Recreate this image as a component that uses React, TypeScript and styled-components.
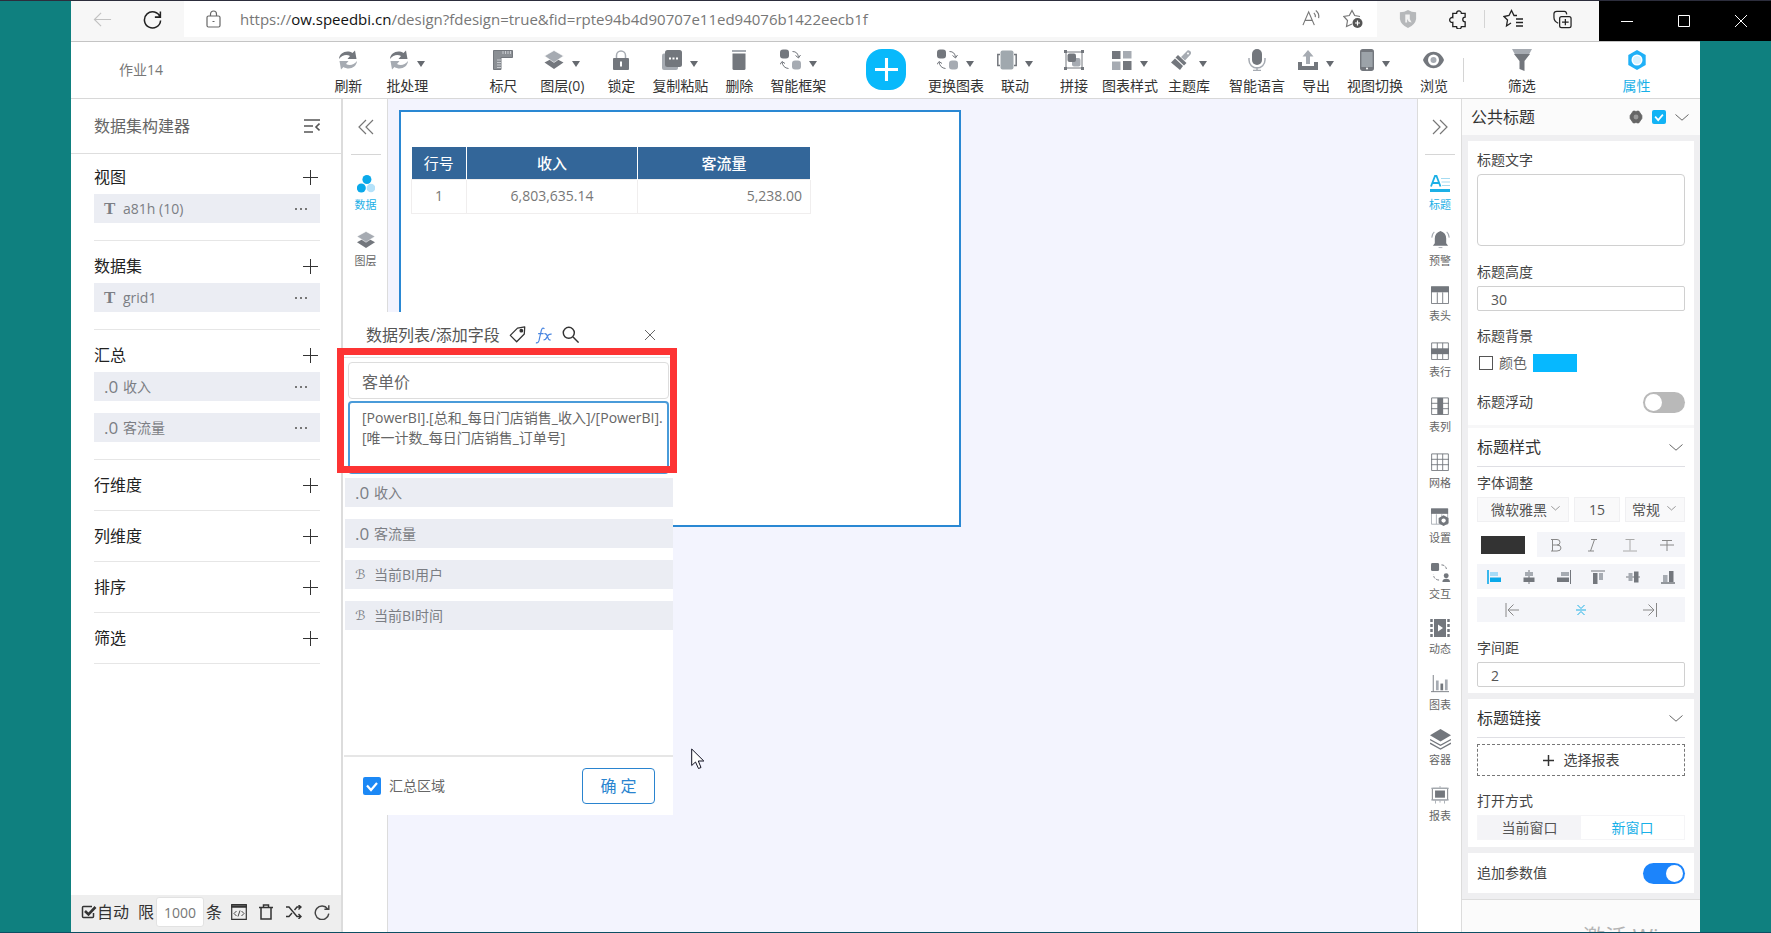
import React from 'react';
import styled, { createGlobalStyle, css } from 'styled-components';

const GlobalStyle = createGlobalStyle`
  *, *::before, *::after { box-sizing: border-box; }
  html, body { margin: 0; padding: 0; }
  body {
    font-family: "Open Sans", "Noto Sans CJK SC", sans-serif;
    font-size: 14px;
    line-height: 20px;
    color: #444;
    background: #0f807f;
    overflow: hidden;
  }
  button, input, select, textarea { font: inherit; color: inherit; margin: 0; }
  button { border: 0; padding: 0; background: none; cursor: pointer; }
  h1, h2, h3, ul { margin: 0; padding: 0; font-weight: 400; list-style: none; }
  svg { display: block; flex: none; }
`;

const Screen = styled.div`
  height: 100vh;
  display: flex;
  flex-direction: column;
  background: #0f807f;
  border-top: 1px solid #2c2d3c;
  border-bottom: 1px solid #0c4f63;
`;

/* ---------- browser bar ---------- */
const BrowserBar = styled.header`
  flex: none;
  height: 40px;
  margin-left: 71px;
  display: flex;
  background: #f7f7f7;
`;
const NavButtons = styled.div`
  width: 113px;
  padding-left: 22px;
  display: flex;
  align-items: center;
  gap: 31px;
  height: 36px;
`;
const Address = styled.div`
  flex: 1;
  min-width: 0;
  height: 36px;
  padding: 0 14px 0 22px;
  display: flex;
  align-items: center;
  background: #fff;
`;
const Url = styled.span`
  flex: 1;
  margin-left: 19px;
  font-size: 15px;
  color: #777;
  white-space: nowrap;
  overflow: hidden;
  b { font-weight: 400; color: #111; }
`;
const AddressTools = styled.div`
  display: flex;
  gap: 22px;
`;
const Extensions = styled.div`
  width: 222px;
  height: 36px;
  padding-left: 22px;
  display: grid;
  grid-template-columns: 50px 35px 19px 50px 20px;
  align-items: center;
`;
const Separator = styled.i<{ $h: number }>`
  flex: none;
  width: 1px;
  height: ${p => p.$h}px;
  background: #d4d4d4;
`;
const WindowControls = styled.div`
  width: 172px;
  padding-right: 2px;
  display: grid;
  grid-template-columns: repeat(3, 1fr);
  background: #000;
  button { display: grid; place-items: center; }
`;

/* ---------- application ---------- */
const AppWindow = styled.main`
  flex: 1;
  min-height: 0;
  margin: 0 71px;
  display: flex;
  flex-direction: column;
  background: #fff;
  border-top: 1px solid #c4c4c4;
`;
const TopBar = styled.div`
  flex: none;
  height: 57px;
  display: flex;
  align-items: center;
  border-bottom: 1px solid #d8d8d8;
`;
const ReportName = styled.h1`
  width: 250px;
  padding-left: 48px;
  font-size: 14px;
  color: #777;
`;
const ToolGroup = styled.div<{ $before?: number }>`
  display: flex;
  margin-left: ${p => p.$before ?? 0}px;
`;
const ToolButton = styled.button<{ $active?: boolean }>`
  width: 59px;
  padding-top: 4px;
  display: flex;
  flex-direction: column;
  align-items: center;
  gap: 5px;
  white-space: nowrap;
  color: ${p => (p.$active ? '#18b0e8' : '#333')};
`;
const ToolIcon = styled.span`
  height: 22px;
  display: flex;
  align-items: center;
  gap: 8px;
`;
const Caret = styled.i`
  margin-top: 8px;
  border: 4px solid transparent;
  border-top: 6px solid #666a70;
  border-bottom: 0;
`;
const AddButton = styled.button`
  width: 41px;
  height: 41px;
  margin: 0 20px 2px 38px;
  border-radius: 16px;
  display: grid;
  place-items: center;
  background: #08b9fb;
`;
const PanelTabs = styled.div`
  width: 239px;
  margin-left: auto;
  padding-right: 6px;
  display: grid;
  grid-template-columns: auto 1fr 1fr;
  align-items: center;
  justify-items: center;
`;
const Workspace = styled.div`
  flex: 1;
  min-height: 0;
  display: flex;
  position: relative;
`;

/* ---------- dataset builder ---------- */
const Builder = styled.aside`
  width: 272px;
  flex: none;
  display: flex;
  flex-direction: column;
  border-right: 2px solid #dcdcdc;
`;
const BuilderHead = styled.div`
  height: 55px;
  flex: none;
  padding: 0 21px 0 23px;
  display: flex;
  align-items: center;
  justify-content: space-between;
  border-bottom: 1px solid #dedede;
  h2 { font-size: 16px; color: #666; }
`;
const Sections = styled.div`
  flex: 1;
  padding: 0 21px 0 23px;
`;
const Section = styled.section`
  padding: 13px 0;
  border-bottom: 1px solid #e6e6e6;
  &:first-child { padding-top: 11px; }
`;
const SectionHead = styled.div`
  height: 24px;
  padding-right: 2px;
  display: flex;
  align-items: center;
  justify-content: space-between;
  h3 { font-size: 16px; color: #222; }
`;
const FieldList = styled.ul`
  display: flex;
  flex-direction: column;
  gap: 12px;
  margin: 5px 0 4px;
`;
const FieldRow = styled.li`
  height: 29px;
  padding: 0 13px 0 10px;
  display: flex;
  align-items: center;
  background: #ebedf3;
  color: #7b7e84;
`;
const TypeMark = styled.span<{ $kind: string }>`
  width: 19px;
  flex: none;
  font-family: ${p => (p.$kind === '.0' ? '"Open Sans"' : '"Liberation Serif", "DejaVu Serif"')}, serif;
  font-size: 17px;
  ${p => p.$kind === 'T' && css`font-weight: 700;`}
  ${p => p.$kind === 'ℬ' && css`font-family: "DejaVu Sans", serif; font-size: 13px; line-height: 18px;`}
`;
const MoreButton = styled.button`
  margin-left: auto;
  display: flex;
  gap: 3px;
  padding: 4px 0;
  i { width: 2px; height: 2px; background: #777; }
`;
const BuilderFoot = styled.div`
  flex: none;
  height: 37px;
  padding: 0 11px 3px 10px;
  display: flex;
  align-items: center;
  font-size: 16px;
  color: #333;
  background: #eee;
  label { display: flex; align-items: center; }
  label + label { margin-left: 9px; }
`;
const LimitInput = styled.input`
  width: 48px;
  height: 30px;
  margin: 0 2px;
  border: 1px solid #e2e2e2;
  border-radius: 3px;
  background: #fff;
  text-align: center;
  font-size: 14px;
  color: #777;
`;
const FootTools = styled.div`
  flex: 1;
  margin-left: 9px;
  display: flex;
  justify-content: space-between;
  align-items: center;
`;
const FootCheck = styled.input`
  appearance: none;
  width: 16px;
  height: 14px;
  background: url("data:image/svg+xml,%3Csvg xmlns='http://www.w3.org/2000/svg' viewBox='0 0 16 14' fill='none' stroke='%23333'%3E%3Cpath d='M11 1.5H2.500Q1.500 1.500 1.500 2.500V11.500Q1.500 12.500 2.500 12.500H11.500Q12.500 12.500 12.500 11.500V8' stroke-width='1.5'/%3E%3Cpath d='M4 6l3.500 3.500L14.500 2' stroke-width='2.600'/%3E%3C/svg%3E") center / contain no-repeat;
`;

/* ---------- rails ---------- */
const Rail = styled.nav<{ $side: 'left' | 'right' }>`
  width: 45px;
  padding-left: 1px;
  flex: none;
  display: flex;
  flex-direction: column;
  align-items: center;
  background: #fff;
  border: 0 solid #dcdcdc;
  border-width: ${p => (p.$side === 'left' ? '0 1px 0 0' : '0 1px')};
`;
const RailToggle = styled.button`
  height: 56px;
  width: 30px;
  flex: none;
  display: grid;
  place-items: center;
  border-bottom: 1px solid #d6d6d6;
`;
const RailList = styled.div<{ $height: number }>`
  flex: none;
  height: ${p => p.$height}px;
  margin-top: 17px;
  display: grid;
  grid-auto-rows: 1fr;
`;
const RailItem = styled.button<{ $active?: boolean }>`
  display: flex;
  flex-direction: column;
  align-items: center;
  gap: 1px;
  font-size: 11px;
  line-height: 16px;
  color: ${p => (p.$active ? '#1cb0e6' : '#666')};
`;
const RailIcon = styled.span`
  height: 24px;
  display: grid;
  place-items: center;
`;

/* ---------- canvas ---------- */
const Canvas = styled.div`
  flex: 1;
  min-width: 0;
  padding: 11px;
  background: #f3f4fe;
`;
const Sheet = styled.div`
  width: 562px;
  max-width: 100%;
  height: 417px;
  padding: 35px 10px;
  border: 2px solid #2a88d3;
  background: #fff;
`;
const Grid = styled.table`
  width: 399px;
  table-layout: fixed;
  border-collapse: collapse;
  th {
    height: 32px;
    padding: 0;
    border: 1px solid #fff;
    border-width: 0 1px;
    background: #336699;
    color: #fff;
    font-size: 15px;
    font-weight: 500;
  }
  th:first-child { font-weight: 400; border-left: 0; }
  td {
    height: 34px;
    padding: 0 8px;
    border: 1px solid #f0eeee;
    text-align: center;
    color: #777;
  }
  td:last-child { text-align: right; }
`;

/* ---------- field popup ---------- */
const Popup = styled.form`
  position: absolute;
  left: 273px;
  top: 213px;
  width: 329px;
  height: 503px;
  display: flex;
  flex-direction: column;
  background: #fff;
`;
const PopupHead = styled.div`
  height: 45px;
  flex: none;
  padding: 0 18px 0 22px;
  display: flex;
  align-items: center;
  h2 { font-size: 16px; color: #555; margin-right: 9px; }
  button + button { margin-left: 9px; }
  button:last-child { margin-left: auto; }
`;
const Editor = styled.div`
  padding: 4px;
  border-top: 1px solid #e2e2e2;
  display: flex;
  flex-direction: column;
  gap: 2px;
`;
const NameInput = styled.input`
  height: 37px;
  padding: 0 13px;
  border: 1px solid #ddd;
  border-radius: 4px;
  font-size: 16px;
  color: #666;
  outline: none;
`;
const FormulaInput = styled.textarea`
  height: 73px;
  padding: 5px 2px 5px 12px;
  border: 2px solid #4a9bd9;
  border-radius: 4px;
  resize: none;
  outline: none;
  overflow: hidden;
  color: #666;
  background: #fff;
`;
const PopupFields = styled(FieldList)`
  margin: 0 0 0 1px;
`;
const PopupFoot = styled.div`
  height: 60px;
  margin-top: auto;
  flex: none;
  padding: 0 18px 0 19px;
  display: flex;
  align-items: center;
  justify-content: space-between;
  border-top: 2px solid #e6e6e6;
  label { display: flex; align-items: center; gap: 8px; color: #666; }
`;
const BlueCheck = styled.input<{ $size: number; $color: string }>`
  appearance: none;
  width: ${p => p.$size}px;
  height: ${p => p.$size}px;
  border-radius: 2px;
  background: ${p => p.$color} url("data:image/svg+xml,%3Csvg xmlns='http://www.w3.org/2000/svg' viewBox='0 0 18 18' fill='none' stroke='white' stroke-width='2.200'%3E%3Cpath d='M4 8.500l4 4.500 6-7'/%3E%3C/svg%3E") center / contain no-repeat;
`;
const ConfirmButton = styled.button`
  width: 73px;
  height: 36px;
  border: 1px solid #2a84cf;
  border-radius: 4px;
  font-size: 16px;
  color: #2a84cf;
`;
const Highlight = styled.div`
  position: absolute;
  left: 266px;
  top: 249px;
  width: 340px;
  height: 125px;
  border: 7px solid #fd3434;
  pointer-events: none;
`;
const Pointer = styled.svg`
  position: absolute;
  left: 620px;
  top: 649px;
`;

/* ---------- property panel ---------- */
const Properties = styled.aside`
  width: 238px;
  flex: none;
  display: flex;
  flex-direction: column;
  background: #efeff1;
  overflow: hidden;
`;
const PropHead = styled.div`
  height: 36px;
  flex: none;
  padding: 0 11px 0 9px;
  display: flex;
  align-items: center;
  background: #fbfbfb;
  h2 { flex: 1; font-size: 16px; color: #333; }
`;
const HeadTools = styled.div`
  display: flex;
  align-items: center;
  gap: 9px;
`;
const Card = styled.section`
  flex: none;
  margin: 6px 6px 0;
  padding: 0 9px;
  background: #fff;
`;
const Block = styled.div<{ $top: number; $bottom?: number }>`
  padding: ${p => p.$top}px 0 ${p => p.$bottom ?? 0}px;
  display: flex;
  flex-direction: column;
`;
const Label = styled.label`
  margin-bottom: 4px;
  color: #444;
`;
const TextArea = styled.textarea`
  height: 72px;
  border: 1px solid #d0d0d0;
  border-radius: 4px;
  resize: none;
  background: #fff;
`;
const TextInput = styled.input`
  width: 100%;
  height: 25px;
  padding: 2px 13px 0;
  border: 1px solid #d0d0d0;
  border-radius: 2px;
  color: #555;
`;
const ColorRow = styled.div`
  height: 26px;
  display: flex;
  align-items: center;
  gap: 6px;
  label { display: flex; align-items: center; gap: 6px; color: #666; }
`;
const PlainCheck = styled.input`
  appearance: none;
  width: 14px;
  height: 14px;
  margin-left: 2px;
  border: 1px solid #555;
`;
const Swatch = styled.button<{ $color: string }>`
  width: 44px;
  height: 18px;
  background: ${p => p.$color};
`;
const SwitchRow = styled.label`
  height: 40px;
  display: flex;
  align-items: center;
  justify-content: space-between;
  color: #444;
`;
const Switch = styled.input`
  appearance: none;
  width: 42px;
  height: 21px;
  border-radius: 11px;
  background: #b9b9b9;
  padding: 2px;
  display: flex;
  &::before { content: ""; width: 17px; height: 17px; border-radius: 50%; background: #fff; }
  &:checked { background: #1c84fb; justify-content: flex-end; }
`;
const CardTitle = styled.div`
  height: 39px;
  padding-right: 2px;
  display: flex;
  align-items: center;
  justify-content: space-between;
  border-bottom: 1px solid #dfdfe4;
  h3 { font-size: 16px; color: #333; }
`;
const CardBreak = styled.div`
  height: 3px;
  margin: 0 -9px;
  background: #f7f7f8;
`;
const FontRow = styled.div`
  height: 25px;
  display: grid;
  grid-template-columns: 92px 46px 60px;
  gap: 5px;
`;
const SelectBox = styled.span<{ $pad: number }>`
  position: relative;
  select {
    appearance: none;
    width: 100%;
    height: 100%;
    padding: 0 0 0 ${p => p.$pad}px;
    border: 1px solid #f0f0f2;
    background: #f9f9fa;
    color: #555;
  }
  svg { position: absolute; right: 9px; top: 9px; pointer-events: none; }
`;
const SizeInput = styled.input`
  width: 100%;
  border: 1px solid #f0f0f2;
  background: #f9f9fa;
  text-align: center;
  color: #555;
`;
const StyleRow = styled.div`
  height: 25px;
  margin-top: 10px;
  padding-left: 4px;
  display: flex;
  align-items: center;
  justify-content: space-between;
`;
const ButtonStrip = styled.div<{ $cols: number; $width?: string; $top?: number }>`
  width: ${p => p.$width ?? '100%'};
  height: 25px;
  margin-top: ${p => p.$top ?? 0}px;
  display: grid;
  grid-template-columns: repeat(${p => p.$cols}, 1fr);
  background: #f4f5f9;
  button { display: grid; place-items: center; }
`;
const DashedButton = styled.button`
  height: 32px;
  border: 1px dashed #777;
  display: flex;
  align-items: center;
  justify-content: center;
  gap: 10px;
  color: #444;
`;
const Segmented = styled.div`
  height: 25px;
  display: grid;
  grid-template-columns: 1fr 1fr;
  border: 1px solid #f5f5f7;
`;
const Segment = styled.button<{ $active?: boolean }>`
  background: ${p => (p.$active ? '#fff' : '#f4f4f7')};
  color: ${p => (p.$active ? '#18b0e8' : '#555')};
`;
const PanelEnd = styled.div`
  flex: 1;
  margin-top: 6px;
  padding: 22px 28px 0;
  border-top: 1px solid #ddd;
  background: #fbfbfb;
  text-align: right;
  font-size: 22px;
  line-height: 28px;
  color: #b4b4b4;
  white-space: nowrap;
`;

/* ---------- icons ---------- */
const G = '#73777d';
const L = '#a6abb2';
type IconProps = { w?: number; h?: number; box?: string; stroke?: string; sw?: number; children: React.ReactNode };
const Icon = ({ w = 20, h, box, stroke, sw = 1, children }: IconProps) => (
  <svg width={w} height={h ?? w} viewBox={box ?? '0 0 20 20'} fill="none" stroke={stroke} strokeWidth={sw} aria-hidden="true">{children}</svg>
);
const Plus = ({ size = 15, color = '#333', sw = 1 }: { size?: number; color?: string; sw?: number }) => (
  <Icon w={size} box="0 0 15 15" stroke={color} sw={sw}><path d="M7.500 0V15M0 7.500H15" /></Icon>
);
const Chevron = ({ size = 14 }: { size?: number }) => (
  <Icon w={size} h={size / 2} box="0 0 14 7" stroke="#666"><path d="M0.500 0.500L7 6.200L13.500 0.500" /></Icon>
);

const glyphs: Record<string, React.ReactNode> = {
  refresh: (
    <Icon w={20}>
      <path d="M1 9C1.500 2.500 9 -0.500 14.500 3L17 0.500L18.500 9H9.500L12 6C8.500 4 4 5 1 9Z" fill={G} />
      <path d="M19 11C18.500 17.500 11 20.500 5.500 17L3 19.500L1.500 11H10.500L8 14C11.500 16 16 15 19 11Z" fill={L} />
    </Icon>
  ),
  ruler: (
    <Icon w={20}>
      <path d="M0.500 0.500H19.500V7.500H8V19.500H0.500Z" fill="#8b8f94" stroke={G} />
      <path d="M10 1V4M12.500 1V4M15 1V4M17.500 1V4M4 10H8M4 12.500H8M4 15H8M4 17.500H8" stroke="#c8cbd0" />
    </Icon>
  ),
  layers: (
    <Icon w={20}>
      <path d="M10 7.500L19.500 12.500L10 19L0.500 12.500Z" fill={G} />
      <path d="M10 0.500L19.500 6L10 12.500L0.500 6Z" fill={L} stroke="#fff" strokeWidth=".6" />
    </Icon>
  ),
  lock: (
    <Icon w={20}>
      <path d="M5.500 8V5.500A4.500 4.500 0 0 1 14.500 5.500V8" stroke={L} strokeWidth="1.5" />
      <rect x="2" y="8" width="16" height="12" rx="1" fill={G} /><path d="M10 11.500V16.500" stroke="#fff" strokeWidth="2" />
    </Icon>
  ),
  copy: (
    <Icon w={20}>
      <rect x="0" y="3.500" width="16" height="16.500" rx="2" fill={L} /><rect x="3" y="0" width="17" height="17" rx="2.500" fill={G} />
      <path d="M7 8.500H9M10.500 8.500H12.500M14 8.500H16" stroke="#fff" strokeWidth="2" />
    </Icon>
  ),
  trash: <Icon w={20}><path d="M3 1H17" stroke={L} strokeWidth="2" /><path d="M3.500 3.500H16.500V18.500Q16.500 20 15 20H5Q3.500 20 3.500 18.500Z" fill={G} /></Icon>,
  swap: (
    <Icon w={21} box="0 0 21 20">
      <rect x="0" y="0" width="9" height="9" rx="3" fill={G} /><rect x="12" y="11" width="9" height="9" rx="3" fill={L} />
      <path d="M12.500 2Q18 2 18.500 8M15.500 6L18.500 8.500L20.500 5.500M8.500 19Q3 18.500 2 12.500M0 15L2 12L5 14" stroke={G} />
    </Icon>
  ),
  link: <Icon w={20}><path d="M3 4.500H0.800V15.500H3M17 4.500H19.200V15.500H17" stroke={G} strokeWidth="1.500" /><rect x="3.500" y="0.500" width="13" height="19" rx="2" fill="#a0a8ae" /></Icon>,
  merge: (
    <Icon w={20}>
      <path d="M2 2H18V18H2Z" stroke={G} /><path d="M0 0H3V3H0ZM17 0H20V3H17ZM0 17H3V20H0ZM17 17H20V20H17Z" fill={G} />
      <rect x="8" y="8" width="8.500" height="8.500" rx="2" fill={L} /><rect x="3.500" y="3.500" width="8.500" height="8.500" rx="2" fill={G} />
    </Icon>
  ),
  tiles: <Icon w={20}><path d="M0 1H8.500V9H0ZM11 11H19.500V20H11Z" fill={G} /><path d="M11 1H19.500V8.500H11ZM0 11.500H8.500V20H0Z" fill={L} /></Icon>,
  brush: (
    <Icon w={20}>
      <path d="M10 7L15.500 1.500A2.400 2.400 0 0 1 19.500 4.500L14 10.500Z" fill={L} /><circle cx="17" cy="3.500" r="1" fill="#fff" />
      <path d="M7 5L15.500 13L13 15.500L4.500 7.500Z" fill={G} /><path d="M4 8.500L12 16L9 20L0 12.500Z" fill={G} />
    </Icon>
  ),
  mic: (
    <Icon w={20} h={22} box="0 0 20 22">
      <rect x="5" y="0" width="10" height="16" rx="5" fill={G} />
      <path d="M2 9V11A8 8 0 0 0 18 11V9M10 18V21M6 21.500H14" stroke={L} strokeWidth="1.500" />
    </Icon>
  ),
  upload: <Icon w={20}><path d="M10 0L15.500 6.500H12V14H8V6.500H4.500Z" fill={L} /><path d="M0 12H4V16H16V12H20V20H0Z" fill={G} /></Icon>,
  phone: <Icon w={14} h={22} box="0 0 14 22"><rect x=".7" y=".7" width="12.600" height="20.600" rx="2" fill="#9ca3a9" stroke={G} strokeWidth="1.400" /><path d="M1 18H13V21H1ZM1 1H13V3H1Z" fill={G} /><circle cx="7" cy="19.500" r="1" fill="#fff" /></Icon>,
  eye: <Icon w={21} h={18} box="0 0 21 18"><path d="M0 9C4-2 17-2 21 9C17 20 4 20 0 9Z" fill={G} /><circle cx="10.500" cy="9" r="5.500" fill="#fff" /><circle cx="10.500" cy="9" r="3" fill={L} /></Icon>,
  funnel: <Icon w={20} h={22} box="0 0 20 22"><path d="M0 0H20L17 5.500H3Z" fill={L} /><path d="M2 5H18L12.500 12V22L7.500 20V12Z" fill={G} /></Icon>,
  hexagon: <Icon w={20}><path d="M10 0L18.700 5V15L10 20L1.300 15V5Z" fill="#1fb0f7" /><circle cx="10" cy="10" r="5.500" fill="#fff" /><circle cx="10" cy="10" r="4" fill="#d9f2fe" /></Icon>,
};

const railGlyphs: Record<string, React.ReactNode> = {
  data: <Icon w={18}><circle cx="11" cy="5" r="5" fill="#0aa9ea" /><circle cx="4.800" cy="14.500" r="5" fill="#0aa9ea" /><circle cx="15.500" cy="14.500" r="4.800" fill="#b5e2fa" /></Icon>,
  layers: <Icon w={18}><path d="M10 7L20 12.500L10 19L0 12.500Z" fill={G} /><path d="M10 0.500L20 6L10 12.500L0 6Z" fill={L} stroke="#fff" strokeWidth=".6" /></Icon>,
  title: <Icon w={20}><path d="M1 12.500L5 2H6.500L10.500 12.500M2.500 9H9" stroke="#1cb0e6" strokeWidth="1.800" /><path d="M11 4.500H20M11.500 8H20M12 11.500H20" stroke="#a5dbf1" /><path d="M0 16.500H20" stroke="#1cb0e6" strokeWidth="3" /></Icon>,
  alarm: <Icon w={19}><path d="M10 1Q16 3 16 9V14L18 16.500H2L4 14V9Q4 3 10 1Z" fill={G} /><path d="M8 18.500H12" stroke={L} /><path d="M3.500 2Q1 4 .8 8M16.500 2Q19 4 19.200 8" stroke={L} strokeWidth="1.200" /></Icon>,
  thead: <Icon w={18}><path d="M.5 1H19.500V19.500H.5ZM7 7V19M13 7V19" stroke={G} /><path d="M0 .5H20V7H0Z" fill={G} /></Icon>,
  trow: <Icon w={18}><path d="M.7 1H19.300V19.500H.7ZM7 1V19M13 1V19" stroke={G} /><path d="M0 7H20V13.500H0Z" fill={G} /></Icon>,
  tcol: <Icon w={18}><path d="M.7 1H19.300V19.500H.7ZM0 7H20M0 13H20" stroke={G} /><path d="M7 1H13.500V19.500H7Z" fill={G} /></Icon>,
  mesh: <Icon w={18}><path d="M.7 1H19.300V19.500H.7ZM7 1V19M13 1V19M0 7H20M0 13H20" stroke={G} /></Icon>,
  config: <Icon w={18}><path d="M.5 1H18.500V18H.5ZM6 7V18M12 7V12" stroke={L} /><path d="M0 .5H19V6.500H0Z" fill={G} /><path d="M14 8L19.500 11V17L14 20L8.500 17V11Z" fill={G} /><circle cx="14" cy="14" r="2.400" fill="#fff" /></Icon>,
  interact: <Icon w={19}><rect x="0" y="0" width="8.500" height="8.500" rx="1.500" fill={G} /><circle cx="16" cy="13.500" r="2.600" fill={G} /><path d="M12 20Q12 16.500 16 16.500T20 20Z" fill={G} /><path d="M11 2Q16 2 16.500 8M8.500 18Q3 17.500 2.500 12" stroke={G} strokeDasharray="3 1.500" /></Icon>,
  motion: <Icon w={20} h={18} box="0 0 20 18"><path d="M4 0H16V18H4Z" fill={G} /><path d="M1.500 0V18M18.500 0V18" stroke={G} strokeWidth="2.500" strokeDasharray="3 2" /><path d="M8 5.500L13 9L8 12.500Z" fill="#fff" /></Icon>,
  chart: <Icon w={18}><path d="M2.500 0V18.500M0 18.500H20" stroke={G} /><path d="M5.500 6H8.500V17H5.500ZM15.500 5H18.500V17H15.500Z" fill={L} /><path d="M10.500 9.500H13.500V17H10.500Z" fill={G} /></Icon>,
  stack: <Icon w={21}><path d="M10 0L20 6L10 12L0 6Z" fill={G} /><path d="M0 10L10 15.500L20 10M0 13.500L10 19L20 13.500" stroke={G} strokeWidth="1.200" /></Icon>,
  board: <Icon w={18}><path d="M1.500 2.500H18.500V15.500H1.500Z" stroke={G} /><path d="M4.500 5H15.500V13H4.500Z" fill={G} /><path d="M0 2.500H20M0 15.500H20M10 0V2M5 16V19.500M15 16V19.500M10 16V18.500" stroke={L} /></Icon>,
};

type Tool = { icon: string; text: string; menu?: boolean; active?: boolean };
const ToolItem = ({ icon, text, menu, active }: Tool) => (
  <ToolButton type="button" $active={active}>
    <ToolIcon>{glyphs[icon]}{menu && <Caret />}</ToolIcon>
    <span>{text}</span>
  </ToolButton>
);

const groupA: Tool[] = [{ icon: 'refresh', text: '刷新' }, { icon: 'refresh', text: '批处理', menu: true }];
const groupB: Tool[] = [
  { icon: 'ruler', text: '标尺' }, { icon: 'layers', text: '图层(0)', menu: true }, { icon: 'lock', text: '锁定' },
  { icon: 'copy', text: '复制粘贴', menu: true }, { icon: 'trash', text: '删除' }, { icon: 'swap', text: '智能框架', menu: true },
];
const groupC: Tool[] = [
  { icon: 'swap', text: '更换图表', menu: true }, { icon: 'link', text: '联动', menu: true }, { icon: 'merge', text: '拼接' },
];
const groupStyle: Tool[] = [
  { icon: 'tiles', text: '图表样式', menu: true }, { icon: 'brush', text: '主题库', menu: true },
];
const groupD: Tool[] = [
  { icon: 'mic', text: '智能语言' }, { icon: 'upload', text: '导出', menu: true },
  { icon: 'phone', text: '视图切换', menu: true }, { icon: 'eye', text: '浏览' },
];

const sections = [
  { name: '视图', rows: [['T', 'a81h (10)']] },
  { name: '数据集', rows: [['T', 'grid1']] },
  { name: '汇总', rows: [['.0', '收入'], ['.0', '客流量']] },
  { name: '行维度', rows: [] },
  { name: '列维度', rows: [] },
  { name: '排序', rows: [] },
  { name: '筛选', rows: [] },
];

const popupFields = [['.0', '收入'], ['.0', '客流量'], ['ℬ', '当前BI用户'], ['ℬ', '当前BI时间']];

const rightRail = [
  ['title', '标题'], ['alarm', '预警'], ['thead', '表头'], ['trow', '表行'], ['tcol', '表列'], ['mesh', '网格'],
  ['config', '设置'], ['interact', '交互'], ['motion', '动态'], ['chart', '图表'], ['stack', '容器'], ['board', '报表'],
];

const alignIcons = [
  <><path d="M1 0V14" stroke="#0aa9ea" strokeWidth="1.600" /><path d="M3 2H11V6H3Z" fill="#a5dcf8" /><path d="M3 7.500H14V12H3Z" fill="#0aa9ea" /></>,
  <><path d="M7 0V14" stroke={G} /><path d="M3 2H11V6H3Z" fill={L} /><path d="M1.500 7.500H12.500V12H1.500Z" fill={G} /></>,
  <><path d="M13.500 0V14" stroke={G} /><path d="M4 2H12V6H4Z" fill={L} /><path d="M0 7.500H12V12H0Z" fill={G} /></>,
  <><path d="M0 1H14" stroke={G} /><path d="M2 3H6.500V14H2Z" fill={G} /><path d="M8 3H12V10H8Z" fill={L} /></>,
  <><path d="M0 7H14" stroke={G} /><path d="M2.500 3H6.500V11H2.500Z" fill={L} /><path d="M8 1.500H12.500V12.500H8Z" fill={G} /></>,
  <><path d="M0 13H14" stroke={G} strokeWidth="1.500" /><path d="M2 5H6.500V12H2Z" fill={L} /><path d="M8 1H12.500V12H8Z" fill={G} /></>,
];

const formula = '[PowerBI].[总和_每日门店销售_收入]/[PowerBI].\n[唯一计数_每日门店销售_订单号]';

export default function App() {
  return (
    <Screen>
      <GlobalStyle />
      <BrowserBar>
        <NavButtons>
          <button type="button" aria-label="后退"><Icon w={19} stroke="#c2c2c2" sw={1.2}><path d="M19 10H1.500M8.500 3L1.500 10L8.500 17" /></Icon></button>
          <button type="button" aria-label="重新加载"><Icon w={19} stroke="#222" sw={1.6}><path d="M18 7.500A8.500 8.500 0 1 0 18.500 11M18.300 1.500V7.500H12.500" /></Icon></button>
        </NavButtons>
        <Address>
          <Icon w={15} h={18} box="0 0 15 18" stroke="#666" sw={1.2}><rect x="1" y="6" width="13" height="11" rx="1.500" /><path d="M4.500 6V4A3 3 0 0 1 10.500 4V6M6.500 11.500H8.500" /></Icon>
          <Url>https://<b>ow.speedbi.cn</b>/design?fdesign=true&amp;fid=rpte94b4d90707e11ed94076b1422eecb1f</Url>
          <AddressTools>
            <Icon w={19} stroke="#777" sw={1.2}><path d="M1 17L7 3L13 17M3 12H11M12.500 4Q14.500 6 14 8.500M14.500 1.500Q18.500 4.500 17.500 9.500" /></Icon>
            <Icon w={20} stroke="#777" sw={1.2}><path d="M9 15L3.500 17.500L4.500 11.500L.8 7.500L6.300 6.500L9 1.500L11.700 6.500L17 7.500" /><circle cx="14.500" cy="14" r="5" fill="#555" stroke="none" /><path d="M14.500 11.500V16.500M12 14H17" stroke="#fff" /></Icon>
          </AddressTools>
        </Address>
        <Extensions>
          <Icon w={18}><path d="M10 0Q14 2.500 19 2.500V10Q18 16.500 10 20Q2 16.500 1 10V2.500Q6 2.500 10 0Z" fill="#b6b8ba" /><path d="M7 5H12V10L14 14L11 13L9 10V14H7Z" fill="#f2f2f2" /></Icon>
          <Icon w={19} stroke="#222" sw={1.4}><path d="M4 3.500H8A2.500 2.500 0 0 1 13 3.500H17V7.500A2 2 0 0 0 17 12.500V17.500H13A2.500 2.500 0 0 1 8 17.500H4V13A2.600 2.600 0 1 1 4 8Z" /></Icon>
          <Separator $h={18} />
          <Icon w={20} stroke="#222" sw={1.3}><path d="M8 14L3.500 17L4.500 11L1 7.500L6 6.500L8.500 1.500L11 6.500H14M13 10H20M13 13.500H20M13 17H20" /></Icon>
          <Icon w={19} stroke="#222" sw={1.3}><path d="M5.500 14Q1 12 1 8V4Q1 1.500 4 1.500H12Q14 1.500 14.500 4.500" /><rect x="7" y="7" width="12" height="11.500" rx="2" /><path d="M13 9.500V16M9.500 12.800H16.500" /></Icon>
        </Extensions>
        <WindowControls>
          <button type="button" aria-label="最小化"><Icon w={12} box="0 0 12 12" stroke="#fff"><path d="M0 6.500H12" /></Icon></button>
          <button type="button" aria-label="最大化"><Icon w={12} box="0 0 12 12" stroke="#fff"><path d="M.5.5H11.500V11.500H.5Z" /></Icon></button>
          <button type="button" aria-label="关闭"><Icon w={12} box="0 0 12 12" stroke="#fff"><path d="M0 0L12 12M12 0L0 12" /></Icon></button>
        </WindowControls>
      </BrowserBar>

      <AppWindow>
        <TopBar>
          <ReportName>作业14</ReportName>
          <ToolGroup>{groupA.map((t, i) => <ToolItem key={i} {...t} />)}</ToolGroup>
          <ToolGroup $before={37}>{groupB.map((t, i) => <ToolItem key={i} {...t} />)}</ToolGroup>
          <AddButton type="button" aria-label="添加"><Plus size={23} color="#fff" sw={2} /></AddButton>
          <ToolGroup>{groupC.map((t, i) => <ToolItem key={i} {...t} />)}</ToolGroup>
          <ToolGroup $before={-3}>{groupStyle.map((t, i) => <ToolItem key={i} {...t} />)}</ToolGroup>
          <ToolGroup $before={9}>{groupD.map((t, i) => <ToolItem key={i} {...t} />)}</ToolGroup>
          <PanelTabs>
            <Separator $h={24} />
            <ToolItem icon="funnel" text="筛选" />
            <ToolItem icon="hexagon" text="属性" active />
          </PanelTabs>
        </TopBar>

        <Workspace>
          <Builder>
            <BuilderHead>
              <h2>数据集构建器</h2>
              <button type="button" aria-label="收起"><Icon w={16} box="0 0 16 14" h={14} stroke="#555" sw={1.6}><path d="M0 1H16M0 7H9M0 13H9M15.500 4.500L12 8L15.500 11.500" /></Icon></button>
            </BuilderHead>
            <Sections>
              {sections.map(s => (
                <Section key={s.name}>
                  <SectionHead>
                    <h3>{s.name}</h3>
                    <button type="button" aria-label={`添加${s.name}`}><Plus /></button>
                  </SectionHead>
                  {s.rows.length > 0 && (
                    <FieldList>
                      {s.rows.map(([kind, name]) => (
                        <FieldRow key={name}>
                          <TypeMark $kind={kind}>{kind}</TypeMark>{name}
                          <MoreButton type="button" aria-label="更多"><i /><i /><i /></MoreButton>
                        </FieldRow>
                      ))}
                    </FieldList>
                  )}
                </Section>
              ))}
            </Sections>
            <BuilderFoot>
              <label><FootCheck type="checkbox" defaultChecked />自动</label>
              <label htmlFor="limit">限</label>
              <LimitInput id="limit" defaultValue="1000" />条
              <FootTools>
                <button type="button" aria-label="代码"><Icon w={16} box="0 0 16 16" stroke="#333" sw={1.2}><path d="M.7.700H15.300V15.300H.7Z" /><path d="M0 2.500H16" strokeWidth="2.500" /><path d="M5.500 7L3 9.500L5.500 12M10.500 7L13 9.500L10.500 12M9 6.500L7 12.500" strokeWidth=".9" /></Icon></button>
                <button type="button" aria-label="删除"><Icon w={14} h={16} box="0 0 14 16" stroke="#333" sw={1.5}><path d="M0 3.500H14M4.500 3V1H9.500V3M2 4V15H12V4" /></Icon></button>
                <button type="button" aria-label="随机"><Icon w={16} h={14} box="0 0 16 14" stroke="#333" sw={1.4}><path d="M0 2H3L11 11.500H15M0 11.500H3L6 8M8.500 5L11 2H15M12.500 0L15 2L12.500 4.500M12.500 9L15 11.500L12.500 14" /></Icon></button>
                <button type="button" aria-label="刷新"><Icon w={16} box="0 0 20 20" stroke="#444" sw={1.8}><path d="M17 6A8.500 8.500 0 1 0 18.500 12M18.500 1.500V6.500H13" /></Icon></button>
              </FootTools>
            </BuilderFoot>
          </Builder>

          <Rail $side="left">
            <RailToggle type="button" aria-label="收起左栏"><Icon w={16} box="0 0 16 16" stroke="#777" sw={1.2}><path d="M8 1L1 8L8 15M15 1L8 8L15 15" /></Icon></RailToggle>
            <RailList $height={111}>
              <RailItem type="button" $active><RailIcon>{railGlyphs.data}</RailIcon>数据</RailItem>
              <RailItem type="button"><RailIcon>{railGlyphs.layers}</RailIcon>图层</RailItem>
            </RailList>
          </Rail>

          <Canvas>
            <Sheet>
              <Grid>
                <colgroup><col width="55" /><col width="171" /><col width="173" /></colgroup>
                <thead><tr><th>行号</th><th>收入</th><th>客流量</th></tr></thead>
                <tbody><tr><td>1</td><td>6,803,635.14</td><td>5,238.00</td></tr></tbody>
              </Grid>
            </Sheet>
          </Canvas>

          <Rail $side="right">
            <RailToggle type="button" aria-label="收起右栏"><Icon w={16} box="0 0 16 16" stroke="#777" sw={1.2}><path d="M1 1L8 8L1 15M8 1L15 8L8 15" /></Icon></RailToggle>
            <RailList $height={666}>
              {rightRail.map(([icon, text], i) => (
                <RailItem type="button" key={icon} $active={i === 0}><RailIcon>{railGlyphs[icon]}</RailIcon>{text}</RailItem>
              ))}
            </RailList>
          </Rail>

          <Properties>
            <PropHead>
              <h2>公共标题</h2>
              <HeadTools>
                <Icon w={14}><path d="M6 1.500H9L10 3L11 1.500H14L18.500 8V12L14 18.500H11L10 17L9 18.500H6L1.500 12V8Z" fill="#666" stroke="#666" strokeLinejoin="round" /><circle cx="10" cy="10" r="3.500" fill="#999" /></Icon>
                <BlueCheck type="checkbox" aria-label="启用公共标题" defaultChecked $size={14} $color="#12b3f5" />
                <Chevron />
              </HeadTools>
            </PropHead>
            <Card>
              <Block $top={9}>
                <Label htmlFor="title-text">标题文字</Label>
                <TextArea id="title-text" />
              </Block>
              <Block $top={16}>
                <Label htmlFor="title-height">标题高度</Label>
                <TextInput id="title-height" defaultValue="30" />
              </Block>
              <Block $top={15}>
                <Label as="span">标题背景</Label>
                <ColorRow>
                  <label><PlainCheck type="checkbox" />颜色</label>
                  <Swatch type="button" aria-label="背景颜色" $color="#06b8ff" />
                </ColorRow>
              </Block>
              <Block $top={6} $bottom={3}>
                <SwitchRow>标题浮动<Switch type="checkbox" role="switch" /></SwitchRow>
              </Block>
              <CardBreak />
              <CardTitle><h3>标题样式</h3><Chevron /></CardTitle>
              <Block $top={6}>
                <Label as="span">字体调整</Label>
                <FontRow>
                  <SelectBox $pad={13}><select aria-label="字体" defaultValue="yahei"><option value="yahei">微软雅黑</option></select><Chevron size={9} /></SelectBox>
                  <SizeInput aria-label="字号" defaultValue="15" />
                  <SelectBox $pad={6}><select aria-label="字重" defaultValue="normal"><option value="normal">常规</option></select><Chevron size={9} /></SelectBox>
                </FontRow>
                <StyleRow>
                  <Swatch type="button" aria-label="字体颜色" $color="#333" />
                  <ButtonStrip $cols={4} $width="148px">
                    <button type="button" aria-label="粗体"><Icon w={14} box="0 0 14 14" stroke="#888"><path d="M2 1.500H8Q11 1.500 11 4.200T8 7H3.500M8 7Q12 7 12 10T8 13H2M3.500 1.500V13" /></Icon></button>
                    <button type="button" aria-label="斜体"><Icon w={14} box="0 0 14 14" stroke="#888"><path d="M5 1.500H11M2 13H8M8.500 1.500L4.500 13" /></Icon></button>
                    <button type="button" aria-label="下划线"><Icon w={14} box="0 0 14 14" stroke="#aaa"><path d="M2.500 1.500H11.500M7 1.500V12.500M0 13H14" /></Icon></button>
                    <button type="button" aria-label="删除线"><Icon w={14} box="0 0 14 14" stroke="#888"><path d="M2 2.500H12M7 2.500V13M0 7H14" /></Icon></button>
                  </ButtonStrip>
                </StyleRow>
                <ButtonStrip $cols={6} $top={7}>
                  {alignIcons.map((g, i) => <button type="button" key={i} aria-label={`对齐 ${i + 1}`}><Icon w={14} box="0 0 14 14">{g}</Icon></button>)}
                </ButtonStrip>
                <ButtonStrip $cols={3} $top={8}>
                  <button type="button" aria-label="靠左"><Icon w={14} box="0 0 14 14" stroke="#888"><path d="M1 0V14M14 7H3M8.500 1.500L3 7L8.500 12.500" /></Icon></button>
                  <button type="button" aria-label="居中"><Icon w={10} box="0 0 10 10" stroke="#1cb0e6"><path d="M1.500 0L5 3.500L8.500 0M1.500 10L5 6.500L8.500 10M0 5H10" /></Icon></button>
                  <button type="button" aria-label="靠右"><Icon w={14} box="0 0 14 14" stroke="#888"><path d="M13.500 0V14M0 7H11M5.500 1.500L11 7L5.500 12.500" /></Icon></button>
                </ButtonStrip>
              </Block>
              <Block $top={16} $bottom={6}>
                <Label htmlFor="spacing">字间距</Label>
                <TextInput id="spacing" defaultValue="2" />
              </Block>
            </Card>
            <Card>
              <CardTitle><h3>标题链接</h3><Chevron /></CardTitle>
              <Block $top={6}>
                <DashedButton type="button"><Plus size={11} sw={2} />选择报表</DashedButton>
              </Block>
              <Block $top={15} $bottom={7}>
                <Label as="span">打开方式</Label>
                <Segmented>
                  <Segment type="button">当前窗口</Segment>
                  <Segment type="button" $active>新窗口</Segment>
                </Segmented>
              </Block>
            </Card>
            <Card>
              <SwitchRow>追加参数值<Switch type="checkbox" role="switch" defaultChecked /></SwitchRow>
            </Card>
            <PanelEnd>激活 Win</PanelEnd>
          </Properties>

          <Popup onSubmit={e => e.preventDefault()}>
            <PopupHead>
              <h2>数据列表/添加字段</h2>
              <button type="button" aria-label="标签"><Icon w={17} stroke="#333" sw={1.5}><path d="M10 2.500L18.500 1L18 9.500L9 18.500L1.500 11Z" strokeLinejoin="round" /><circle cx="14.500" cy="5.500" r="1.500" fill="#333" /></Icon></button>
              <button type="button" aria-label="函数"><Icon w={18} stroke="#4a86e0" sw={1.3}><path d="M10.500 3Q8 1 7 5L4.500 16Q3.500 19.500 1 18.500M3.500 8.500H9.500M10.500 8.500Q13 8 14 12T17.500 15.500M18.500 9Q15 8.500 13.500 12T9.500 15.500" /></Icon></button>
              <button type="button" aria-label="搜索"><Icon w={17} stroke="#333" sw={1.7}><circle cx="8" cy="8" r="6.500" /><path d="M13 13L19.500 19.500" /></Icon></button>
              <button type="button" aria-label="关闭"><Icon w={10} box="0 0 10 10" stroke="#666"><path d="M0 0L10 10M10 0L0 10" /></Icon></button>
            </PopupHead>
            <Editor>
              <NameInput aria-label="字段名称" defaultValue="客单价" />
              <FormulaInput aria-label="公式" defaultValue={formula} />
            </Editor>
            <PopupFields>
              {popupFields.map(([kind, name]) => (
                <FieldRow key={name}><TypeMark $kind={kind}>{kind}</TypeMark>{name}</FieldRow>
              ))}
            </PopupFields>
            <PopupFoot>
              <label><BlueCheck type="checkbox" defaultChecked $size={18} $color="#1c88f5" />汇总区域</label>
              <ConfirmButton type="submit">确 定</ConfirmButton>
            </PopupFoot>
          </Popup>
          <Highlight />
          <Pointer width="14" height="22" viewBox="0 0 14 22" fill="#fff" stroke="#112" aria-hidden="true">
            <path d="M.7 1V17.500L4.500 14L7.500 20.500L10 19.500L7.300 13H12.800Z" />
          </Pointer>
        </Workspace>
      </AppWindow>
    </Screen>
  );
}
